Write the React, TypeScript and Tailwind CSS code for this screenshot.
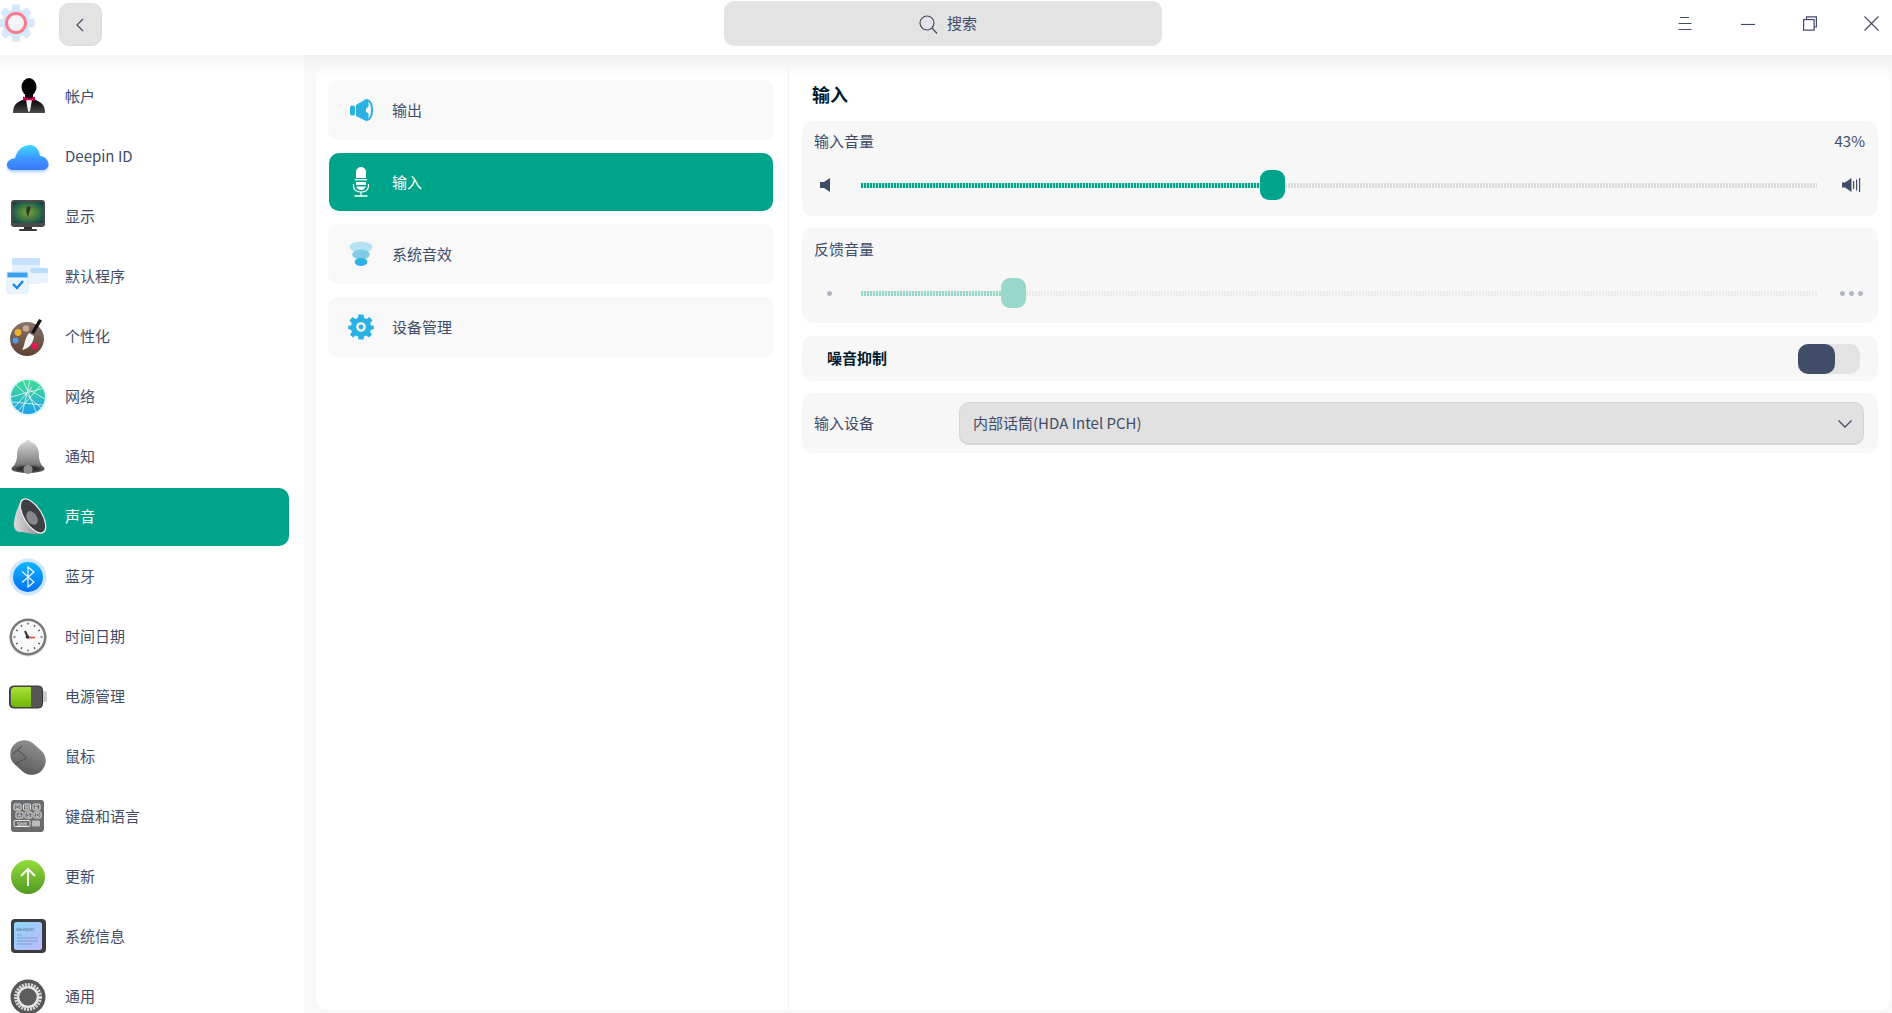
import React from 'react';

const FONT = "font-['Noto_Sans_CJK_SC','Noto_Sans',sans-serif]";

const Account = () => (
  <svg width="40" height="40" viewBox="0 0 40 40">
    <defs>
      <linearGradient id="suit" x1="0" y1="0" x2="0" y2="1">
        <stop offset="0" stopColor="#000" />
        <stop offset="1" stopColor="#4a4a4a" />
      </linearGradient>
    </defs>
    <ellipse cx="21" cy="10" rx="7.5" ry="9" fill="#050505" />
    <rect x="17" y="15" width="8" height="8" fill="#050505" />
    <path d="M5 36 C5 27 9 25 17 22 L25 22 C33 25 37 27 37 36 Z" fill="url(#suit)" />
    <path d="M18 23 L24 23 L22 34 L21 35 L20 34 Z" fill="#f4f4f4" />
    <path d="M15 19.5 L21 21.5 L27 19.5 L27 24 L21 23 L15 24 Z" fill="#c4004f" />
  </svg>
);

const Cloud = () => (
  <svg width="44" height="40" viewBox="0 0 44 40">
    <defs>
      <linearGradient id="cloud" x1="0" y1="0" x2="0" y2="1">
        <stop offset="0" stopColor="#3fd8ff" />
        <stop offset="0.55" stopColor="#3e96ff" />
        <stop offset="1" stopColor="#3a79fa" />
      </linearGradient>
      <filter id="cloudGlow" x="-20%" y="-20%" width="140%" height="150%">
        <feDropShadow dx="0" dy="2" stdDeviation="1.5" floodColor="#5aa0ff" floodOpacity="0.5" />
      </filter>
    </defs>
    <path
      d="M7 33 C2 33 0.5 29 1 27 C1.5 23.5 5 21.5 9 21.5 C11 13 17 8 24 8 C30 8 33 13 34 19 C39 19 42.5 23.5 42.5 27.5 C42.5 31 39.5 33 36 33 Z"
      fill="url(#cloud)"
      filter="url(#cloudGlow)"
    />
  </svg>
);

const Display = () => (
  <svg width="40" height="40" viewBox="0 0 40 40">
    <defs>
      <radialGradient id="screen" cx="0.5" cy="0.5" r="0.7">
        <stop offset="0" stopColor="#7fa52f" />
        <stop offset="0.6" stopColor="#2e6a48" />
        <stop offset="1" stopColor="#0c3a48" />
      </radialGradient>
    </defs>
    <rect x="3" y="3" width="34" height="27" rx="3" fill="#4a4a4a" />
    <rect x="5" y="5" width="30" height="21" fill="url(#screen)" />
    <path d="M19 9 L23 10 L20 20 L18 15 Z" fill="#2b3a2a" />
    <rect x="16" y="30" width="8" height="2" fill="#333" />
    <rect x="11" y="32" width="18" height="2" rx="1" fill="#3a3a3a" />
  </svg>
);

const DefaultApps = () => (
  <svg width="44" height="44" viewBox="0 0 44 44">
    <rect x="6" y="3" width="28" height="26" rx="2" fill="#e4f0fd" />
    <rect x="6" y="3" width="28" height="7" rx="2" fill="#c6e1fd" />
    <rect x="24" y="13" width="18" height="15" rx="2" fill="#e8f3fe" />
    <rect x="24" y="13" width="18" height="5" rx="2" fill="#b9dcfb" />
    <rect x="1" y="17" width="21" height="21" rx="2" fill="#fff" stroke="#cfe4fb" />
    <rect x="1.5" y="17.5" width="20" height="5" fill="#3c9ff0" />
    <rect x="2" y="23" width="19" height="14" fill="#eaf4fe" />
    <path d="M7 29 L11 33 L17 26" fill="none" stroke="#1787ea" strokeWidth="2.4" />
  </svg>
);

const Palette = () => (
  <svg width="40" height="44" viewBox="0 0 40 44">
    <defs>
      <linearGradient id="pal" x1="0" y1="0" x2="0" y2="1">
        <stop offset="0" stopColor="#86736a" />
        <stop offset="1" stopColor="#5f4133" />
      </linearGradient>
    </defs>
    <circle cx="19" cy="24" r="17" fill="url(#pal)" />
    <circle cx="18" cy="13.5" r="3.2" fill="#c9a99b" />
    <circle cx="10" cy="17.5" r="3.4" fill="#f3b02c" />
    <circle cx="7.5" cy="25.5" r="3" fill="#4f9bea" />
    <circle cx="27" cy="31" r="3.2" fill="#e8174f" />
    <path d="M31 4 L34 5.5 L26 19 L23 17.5 Z" fill="#151515" />
    <path d="M21 18 L26 21 C26 27 21 34 14 35 C17 31 16 24 21 18 Z" fill="#f4f4f4" />
  </svg>
);

const Network = () => (
  <svg width="40" height="40" viewBox="0 0 40 40">
    <defs>
      <linearGradient id="net" x1="0" y1="0" x2="0" y2="1">
        <stop offset="0" stopColor="#3fdc96" />
        <stop offset="0.55" stopColor="#2fc0bd" />
        <stop offset="1" stopColor="#1e9df0" />
      </linearGradient>
      <clipPath id="netClip">
        <circle cx="20" cy="20" r="17" />
      </clipPath>
    </defs>
    <circle cx="20" cy="20" r="19" fill="#c8f4fa" opacity="0.6" />
    <circle cx="20" cy="20" r="17" fill="url(#net)" />
    <g clipPath="url(#netClip)" stroke="#fff" strokeWidth="0.8" opacity="0.9" fill="none">
      <path d="M15 3 L29 37" />
      <path d="M22 3 L14 37" />
      <path d="M3 20 L36 11" />
      <path d="M4 25 L35 28" />
      <path d="M8 8 L34 32" />
      <path d="M33 8 L10 34" />
      <path d="M20 12 L37 22" />
      <path d="M6 31 L24 10" />
    </g>
  </svg>
);

const Bell = () => (
  <svg width="40" height="40" viewBox="0 0 40 40">
    <defs>
      <linearGradient id="bell" x1="0" y1="0" x2="0" y2="1">
        <stop offset="0" stopColor="#d8d8d8" />
        <stop offset="0.7" stopColor="#8f8f8f" />
        <stop offset="1" stopColor="#6a6a6a" />
      </linearGradient>
    </defs>
    <path d="M20 3 C21.5 3 22 4 22.5 5 C28 6.5 31 11 31 18 C31 24 33 28 36.5 31 L3.5 31 C7 28 9 24 9 18 C9 11 12 6.5 17.5 5 C18 4 18.5 3 20 3 Z" fill="url(#bell)" />
    <ellipse cx="20" cy="32" rx="16.5" ry="4" fill="#4f4f4f" />
    <ellipse cx="20" cy="32" rx="12" ry="2.6" fill="#2f2f2f" />
    <circle cx="20" cy="32.5" r="4.6" fill="#8c8c8c" />
  </svg>
);

const Speaker = () => (
  <svg width="40" height="40" viewBox="0 0 40 40">
    <defs>
      <linearGradient id="spk" x1="0" y1="0" x2="1" y2="0">
        <stop offset="0" stopColor="#dcdcdc" />
        <stop offset="1" stopColor="#8a8a8a" />
      </linearGradient>
    </defs>
    <path d="M14 2 C10 10 7 16 6 26 C5 33 10 36 14 35 C20 36 28 38 33 37 Z" fill="url(#spk)" />
    <ellipse cx="25" cy="19" rx="9.5" ry="20" transform="rotate(-32 25 19)" fill="#efefef" />
    <ellipse cx="25" cy="19" rx="8.3" ry="18.6" transform="rotate(-32 25 19)" fill="#3d3f45" />
    <ellipse cx="24" cy="21" rx="5" ry="7.5" transform="rotate(-32 24 21)" fill="#85878a" />
  </svg>
);

const Bluetooth = () => (
  <svg width="40" height="40" viewBox="0 0 40 40">
    <defs>
      <linearGradient id="bt" x1="0" y1="0" x2="0" y2="1">
        <stop offset="0" stopColor="#12b5ff" />
        <stop offset="1" stopColor="#0070f5" />
      </linearGradient>
    </defs>
    <circle cx="20" cy="20" r="18.5" fill="#bcdcff" opacity="0.7" />
    <circle cx="20" cy="20" r="15" fill="url(#bt)" />
    <path d="M14 14.5 L26 25 L20 30 L20 10 L26 15 L14 25.5" fill="none" stroke="#fff" strokeWidth="1.1" />
  </svg>
);

const Clock = () => (
  <svg width="40" height="40" viewBox="0 0 40 40">
    <circle cx="20" cy="21" r="18.5" fill="#d5d5d5" />
    <circle cx="20" cy="20" r="18.5" fill="#7a7a7a" />
    <circle cx="20" cy="20" r="16" fill="#f8f8f8" />
    <g stroke="#444" strokeWidth="1.1">
      <path d="M20 5.5 V7.5" />
      <path d="M20 32.5 V34.5" />
      <path d="M5.5 20 H7.5" />
      <path d="M32.5 20 H34.5" />
      <path d="M27 8 L26 9.7" />
      <path d="M13 8 L14 9.7" />
      <path d="M32 13 L30.3 14" />
      <path d="M8 13 L9.7 14" />
      <path d="M32 27 L30.3 26" />
      <path d="M8 27 L9.7 26" />
      <path d="M27 32 L26 30.3" />
      <path d="M13 32 L14 30.3" />
    </g>
    <path d="M17 14 L20 20.5" stroke="#333" strokeWidth="2" />
    <path d="M20 20.5 H27" stroke="#ef4444" strokeWidth="1.6" />
    <circle cx="19.5" cy="20" r="1.8" fill="#333" />
  </svg>
);

const Battery = () => (
  <svg width="40" height="30" viewBox="0 0 40 30">
    <defs>
      <linearGradient id="batt" x1="0" y1="0" x2="0" y2="1">
        <stop offset="0" stopColor="#a8e03a" />
        <stop offset="1" stopColor="#6fb800" />
      </linearGradient>
    </defs>
    <rect x="33" y="9" width="6" height="11" rx="2.5" fill="#ccc" />
    <rect x="1.5" y="4" width="33" height="22" rx="4" fill="#565656" stroke="#333" />
    <path d="M3 9 Q3 5 7 5 H23 V25 H7 Q3 25 3 21 Z" fill="url(#batt)" />
  </svg>
);

const Mouse = () => (
  <svg width="40" height="40" viewBox="0 0 40 40">
    <defs>
      <linearGradient id="mouse" x1="0" y1="0" x2="0.6" y2="1">
        <stop offset="0" stopColor="#969696" />
        <stop offset="1" stopColor="#5f5f5f" />
      </linearGradient>
    </defs>
    <rect x="1" y="6.5" width="38" height="28" rx="14" transform="rotate(42 20 20.5)" fill="url(#mouse)" />
    <path d="M5 17 L14 9 M9.5 13 L19 21 L7 27" fill="none" stroke="#4a4a4a" strokeWidth="1" />
  </svg>
);

const Keyboard = () => (
  <svg width="40" height="40" viewBox="0 0 40 40">
    <rect x="3" y="3" width="33" height="32" rx="3" fill="#6b6b6b" />
    <g fill="none" stroke="#e6e6e6" strokeWidth="1">
      <rect x="6" y="7" width="7" height="6" rx="1" />
      <rect x="15.5" y="7" width="7" height="6" rx="1" />
      <rect x="25" y="7" width="7" height="6" rx="1" />
      <rect x="8" y="15" width="7" height="6" rx="1" />
      <rect x="17" y="15" width="7" height="6" rx="1" />
      <rect x="26" y="15" width="7" height="6" rx="1" />
      <rect x="6" y="23.5" width="16" height="6" rx="1" />
    </g>
    <g fill="#f0f0f0" fontSize="5" fontFamily="Liberation Sans, sans-serif" textAnchor="middle">
      <text x="9.5" y="12">Q</text>
      <text x="19" y="12">W</text>
      <text x="28.5" y="12">E</text>
      <text x="11.5" y="20">A</text>
      <text x="20.5" y="20">S</text>
      <text x="29.5" y="20">D</text>
      <text x="14" y="28.5">Shift</text>
    </g>
    <rect x="24" y="23.5" width="8" height="6" rx="1" fill="#bbb" />
  </svg>
);

const Update = () => (
  <svg width="40" height="40" viewBox="0 0 40 40">
    <defs>
      <linearGradient id="upd" x1="0" y1="0" x2="0" y2="1">
        <stop offset="0" stopColor="#96dc3c" />
        <stop offset="1" stopColor="#4e9a22" />
      </linearGradient>
    </defs>
    <circle cx="20" cy="20" r="17" fill="url(#upd)" />
    <path d="M20 29 V12 M13 19 L20 12 L27 19" fill="none" stroke="#f6faf0" strokeWidth="2" />
  </svg>
);

const SysInfo = () => (
  <svg width="40" height="40" viewBox="0 0 40 40">
    <defs>
      <linearGradient id="info" x1="0" y1="0" x2="1" y2="1">
        <stop offset="0" stopColor="#8ad8f5" />
        <stop offset="1" stopColor="#c0b8ff" />
      </linearGradient>
    </defs>
    <rect x="3" y="2" width="35" height="34" rx="4" fill="#3c3c3e" />
    <rect x="6" y="5" width="28" height="28" rx="2.5" fill="url(#info)" />
    <text x="8" y="14" fontSize="6" fill="#5c78a0" fontFamily="Liberation Sans, sans-serif">deepin</text>
    <path d="M9 18 H14 M9 21 H30 M9 24 H30 M9 27 H24" stroke="#7e8fb8" strokeWidth="0.8" />
  </svg>
);

const General = () => (
  <svg width="40" height="40" viewBox="0 0 40 40">
    <circle cx="20" cy="20" r="17.5" fill="#565656" />
    <circle cx="20" cy="20" r="12.2" fill="none" stroke="#d9d9d9" strokeWidth="3.6" strokeDasharray="2 1" />
    <circle cx="20" cy="20" r="9.8" fill="none" stroke="#e6e6e6" strokeWidth="2.4" />
    <circle cx="20" cy="20" r="8.4" fill="#5d5d5d" />
  </svg>
);

const sideItems = [
  { label: '帐户', icon: <Account /> },
  { label: 'Deepin ID', icon: <Cloud /> },
  { label: '显示', icon: <Display /> },
  { label: '默认程序', icon: <DefaultApps /> },
  { label: '个性化', icon: <Palette /> },
  { label: '网络', icon: <Network /> },
  { label: '通知', icon: <Bell /> },
  { label: '声音', icon: <Speaker />, active: true },
  { label: '蓝牙', icon: <Bluetooth /> },
  { label: '时间日期', icon: <Clock /> },
  { label: '电源管理', icon: <Battery /> },
  { label: '鼠标', icon: <Mouse /> },
  { label: '键盘和语言', icon: <Keyboard /> },
  { label: '更新', icon: <Update /> },
  { label: '系统信息', icon: <SysInfo /> },
  { label: '通用', icon: <General /> },
];

const OutputIcon = () => (
  <svg width="24" height="24" viewBox="0 0 24 24">
    <rect x="1" y="7.5" width="5" height="10" rx="2" fill="#29b2e3" />
    <path d="M7 7 L17 1 C22 1 24 6 24 12 C24 18 22 23 17 23 L7 18 Z" fill="#29b2e3" />
    <path d="M19 3.5 C21.5 5 22 9 22 12 C22 15 21.5 19 19 20.5 C20 17 20 15 18 14.5 C16.5 14 16.5 10.5 18 10 C20 9 20 7 19 3.5 Z" fill="#f7f7f7" />
  </svg>
);

const MicIcon = () => (
  <svg width="18" height="30" viewBox="0 0 18 30">
    <path d="M4 5 A5 5 0 0 1 14 5 V11 H4 Z" fill="#fff" />
    <rect x="3" y="12" width="12" height="1.4" fill="#fff" />
    <rect x="4" y="15" width="10" height="3" fill="#fff" />
    <path d="M1.5 17 V19 C1.5 23 5 25 9 25 C13 25 16.5 23 16.5 19 V17" fill="none" stroke="#fff" strokeWidth="1.2" />
    <path d="M4 19.5 C5 22 7 23 9 23 C11 23 13 22 14 19.5 Z" fill="#fff" />
    <path d="M9 25 V28.5 M2.5 29 H15.5" stroke="#fff" strokeWidth="1.3" />
  </svg>
);

const EffectIcon = () => (
  <svg width="24" height="26" viewBox="0 0 24 26">
    <ellipse cx="12" cy="6" rx="11.5" ry="5.5" fill="#b4e2f2" />
    <ellipse cx="12" cy="13.5" rx="8.8" ry="5" fill="#7fcbe8" />
    <ellipse cx="12" cy="21" rx="6.4" ry="4" fill="#2cb2e4" />
  </svg>
);

const GearIcon = () => (
  <svg width="26" height="26" viewBox="0 0 26 26">
    <path
      fillRule="evenodd"
      d="M10.5 0.5 H15.5 L16.2 4 L18.6 5 L21.6 3 L24.5 6.5 L22.2 9.2 L23 11.4 L25.8 11.8 V15.2 L23 15.8 L22.2 18 L24 20.8 L20.8 23.6 L18.2 21.6 L16 22.6 L15.5 25.5 H10.5 L10 22.6 L7.6 21.6 L5 23.6 L2 20.8 L3.8 18 L3 15.8 L0.2 15.2 V11.8 L3 11.4 L3.8 9.2 L1.5 6.5 L4.4 3 L7.4 5 L9.8 4 Z M13 8.2 A4.8 4.8 0 1 0 13 17.8 A4.8 4.8 0 1 0 13 8.2 Z M13 10.6 A2.4 2.4 0 1 1 13 15.4 A2.4 2.4 0 1 1 13 10.6 Z"
      fill="#29b2e3"
    />
  </svg>
);

const subItems = [
  { label: '输出', icon: <OutputIcon /> },
  { label: '输入', icon: <MicIcon />, active: true },
  { label: '系统音效', icon: <EffectIcon /> },
  { label: '设备管理', icon: <GearIcon /> },
];

const Logo = () => (
  <svg width="38" height="38" viewBox="0 0 38 38">
    <g fill="#d6e7fa">
      <circle cx="18" cy="19" r="14" />
      {[0, 45, 90, 135, 180, 225, 270, 315].map((deg) => (
        <rect key={deg} x="14" y="0.5" width="8" height="8" rx="2" transform={`rotate(${deg} 18 19)`} />
      ))}
    </g>
    <circle cx="18" cy="19" r="9.5" fill="#f3f5f8" />
    <circle cx="18" cy="19" r="9.5" fill="none" stroke="#fb7a8c" strokeWidth="3" />
  </svg>
);

const Slider = ({ percent, muted, left, right }: { percent: number; muted?: boolean; left: React.ReactNode; right: React.ReactNode }) => (
  <div className="flex items-center h-[30px] mt-[8px]">
    <div className="w-[47px] pl-[6px] flex items-center">{left}</div>
    <div className="relative flex-1 h-[30px] flex items-center">
      <div
        className={`h-[5px] ${muted ? 'bg-[repeating-linear-gradient(90deg,#98d8ca_0,#98d8ca_2px,#e4f4f0_2px,#e4f4f0_3px)]' : 'bg-[repeating-linear-gradient(90deg,#00a48a_0,#00a48a_2px,#b8e6dc_2px,#b8e6dc_3px)]'}`}
        style={{ width: `${percent}%` }}
      />
      <div
        className={`flex-1 h-[5px] ${muted ? 'bg-[repeating-linear-gradient(90deg,#ececec_0,#ececec_2px,#f7f7f7_2px,#f7f7f7_3px)]' : 'bg-[repeating-linear-gradient(90deg,#dcdcdc_0,#dcdcdc_2px,#f7f7f7_2px,#f7f7f7_3px)]'}`}
      />
      <div
        className={`absolute top-0 w-[25px] h-[30px] rounded-[9px] ${muted ? 'bg-[#98d8ca]' : 'bg-[#00a48a]'}`}
        style={{ left: `calc(${percent}% - 1px)` }}
      />
    </div>
    <div className="w-[49px] pl-[25px] flex items-center">{right}</div>
  </div>
);

export default function App() {
  return (
    <div className={`w-[1892px] h-[1013px] bg-[#f8f8f8] flex flex-col overflow-hidden text-[#414d68] ${FONT}`}>
      {/* titlebar */}
      <header className="relative h-[55px] shrink-0 bg-white flex items-center">
        <div className="absolute left-[-2px] top-[4px]">
          <Logo />
        </div>
        <button className="absolute left-[59px] top-[3px] w-[43px] h-[43px] rounded-[10px] bg-[#e3e3e3] border border-[#dcdcdc] flex items-center justify-center pr-[2px]">
          <svg width="10" height="16" viewBox="0 0 10 16" fill="none" stroke="#414d68" strokeWidth="1.2">
            <path d="M8 2 L2 8 L8 14" />
          </svg>
        </button>
        <div className="absolute left-[724px] top-[1px] w-[438px] h-[45px] rounded-[10px] bg-[#e3e3e3] flex items-center pl-[194px] gap-[9px] text-[15px]">
          <svg width="20" height="20" viewBox="0 0 20 20" fill="none" stroke="#414d68" strokeWidth="1.2">
            <circle cx="9" cy="9" r="7" />
            <path d="M14 14 L19 19.5" />
          </svg>
          <span>搜索</span>
        </div>
        <div className="absolute right-[13px] top-[16px] flex items-center">
          <svg width="14" height="15" viewBox="0 0 14 15" stroke="#414d68" strokeWidth="1.2">
            <path d="M2 1.5 H11 M0.5 7.5 H13.5 M0.5 13.5 H13.5" />
          </svg>
          <svg className="ml-[49px]" width="14" height="15" viewBox="0 0 14 15" stroke="#414d68" strokeWidth="1.2">
            <path d="M0 8.5 H14" />
          </svg>
          <svg className="ml-[48px]" width="14" height="15" viewBox="0 0 14 15" fill="none" stroke="#414d68" strokeWidth="1.2">
            <rect x="0.6" y="3.6" width="10.5" height="10.5" />
            <path d="M3.5 3.5 V0.8 H13.4 V11 H11" />
          </svg>
          <svg className="ml-[47px]" width="15" height="15" viewBox="0 0 15 15" stroke="#414d68" strokeWidth="1.2">
            <path d="M0.5 0.5 L14.5 14.5 M14.5 0.5 L0.5 14.5" />
          </svg>
        </div>
      </header>

      <div className="flex-1 flex min-h-0 bg-gradient-to-b from-[#f0f0f0] to-[#f8f8f8] bg-[length:100%_14px] bg-no-repeat">
        {/* sidebar */}
        <nav className="w-[304px] shrink-0 bg-gradient-to-b from-[#f7f7f7] to-white bg-[length:100%_20px] bg-no-repeat bg-white pt-[11.5px] overflow-hidden">
          {sideItems.map((item) => (
            <div key={item.label} className="h-[60.03px] flex items-center">
              <div
                className={`w-[289px] h-[58px] rounded-r-[10px] flex items-center ${item.active ? 'bg-[#00a48a] text-white' : ''}`}
              >
                <div className="w-[56px] h-[44px] flex items-center justify-center shrink-0">{item.icon}</div>
                <span className="ml-[9px] text-[15px]">{item.label}</span>
              </div>
            </div>
          ))}
        </nav>

        {/* main panel */}
        <main className="flex-1 ml-[12px] mr-[2px] mt-[12px] mb-[3px] bg-white bg-gradient-to-b from-[#fafafa] to-white bg-[length:100%_14px] bg-no-repeat rounded-[10px] flex min-w-0">
          <section className="w-[473px] shrink-0 border-r border-[#f2f2f2] pt-[13px] pl-[12px] pr-[14px] flex flex-col gap-[13px]">
            {subItems.map((item) =>
              item.active ? (
                <div key={item.label} className="h-[58px] mx-[1px] rounded-[10px] bg-[#00a48a] text-white flex items-center">
                  <div className="w-[63px] flex justify-center">{item.icon}</div>
                  <span className="text-[15px]">{item.label}</span>
                </div>
              ) : (
                <div key={item.label} className="h-[60px] rounded-[10px] bg-[#f8f8f8] flex items-center">
                  <div className="w-[64px] flex justify-center pl-[2px]">{item.icon}</div>
                  <span className="text-[15px]">{item.label}</span>
                </div>
              ),
            )}
          </section>

          <section className="flex-1 min-w-0 pl-[13px] pr-[12px] flex flex-col">
            <h1 className="h-[54px] shrink-0 pl-[10px] flex items-center text-[18px] font-bold text-[#001a2e]">输入</h1>
            <div className="flex flex-col gap-[12px]">
              <div className="h-[95px] rounded-[10px] bg-[#f7f7f7] px-[12px]">
                <div className="flex justify-between items-center h-[41px] text-[15px] pr-[1px]">
                  <span>输入音量</span>
                  <span>43%</span>
                </div>
                <Slider
                  percent={41.85}
                  left={
                    <svg width="12" height="14" viewBox="0 0 12 14" fill="#414d68">
                      <path d="M0 4 H4 L10 0 V14 L4 10 H0 Z" />
                    </svg>
                  }
                  right={
                    <svg width="19" height="14" viewBox="0 0 19 14" fill="#414d68">
                      <path d="M0 4.5 H3 L9.5 0 V14 L3 9.5 H0 Z" />
                      <rect x="11" y="3" width="1.2" height="8" />
                      <rect x="14" y="1.5" width="1.2" height="11" />
                      <rect x="17" y="0" width="1.2" height="14" />
                    </svg>
                  }
                />
              </div>
              <div className="h-[95px] rounded-[10px] bg-[#f7f7f7] px-[12px]">
                <div className="flex items-center h-[41px] pt-[1px] text-[15px]">反馈音量</div>
                <div className="pt-[1px]">
                  <Slider
                    percent={14.75}
                    muted
                    left={<span className="ml-[7px] w-[5px] h-[5px] rounded-full bg-[#b3b8c3]" />}
                    right={
                      <span className="flex gap-[4px] -ml-[2px]">
                        <span className="w-[5px] h-[5px] rounded-full bg-[#b3b8c3]" />
                        <span className="w-[5px] h-[5px] rounded-full bg-[#b3b8c3]" />
                        <span className="w-[5px] h-[5px] rounded-full bg-[#b3b8c3]" />
                      </span>
                    }
                  />
                </div>
              </div>
              <div className="h-[45px] mt-[1px] rounded-[10px] bg-[#f7f7f7] pl-[25px] pr-[18px] flex items-center justify-between">
                <span className="text-[15px] font-bold text-[#001a2e]">噪音抑制</span>
                <div className="w-[62px] h-[30px] rounded-[10px] bg-[#e3e3e3]">
                  <div className="w-[37px] h-[30px] rounded-[10px] bg-[#414d68]" />
                </div>
              </div>
              <div className="h-[60px] rounded-[10px] bg-[#f7f7f7] pl-[12px] pr-[14px] flex items-center">
                <span className="w-[145px] text-[15px]">输入设备</span>
                <div className="flex-1 h-[43px] rounded-[10px] bg-[#e1e1e1] border border-[#d6d6d6] border-b-2 flex items-center justify-between pt-[2px] pl-[13px] pr-[10px] text-[15px]">
                  <span>内部话筒(HDA Intel PCH)</span>
                  <svg width="16" height="10" viewBox="0 0 16 10" fill="none" stroke="#414d68" strokeWidth="1.3">
                    <path d="M1.5 1.5 L8 8 L14.5 1.5" />
                  </svg>
                </div>
              </div>
            </div>
          </section>
        </main>
      </div>
    </div>
  );
}
